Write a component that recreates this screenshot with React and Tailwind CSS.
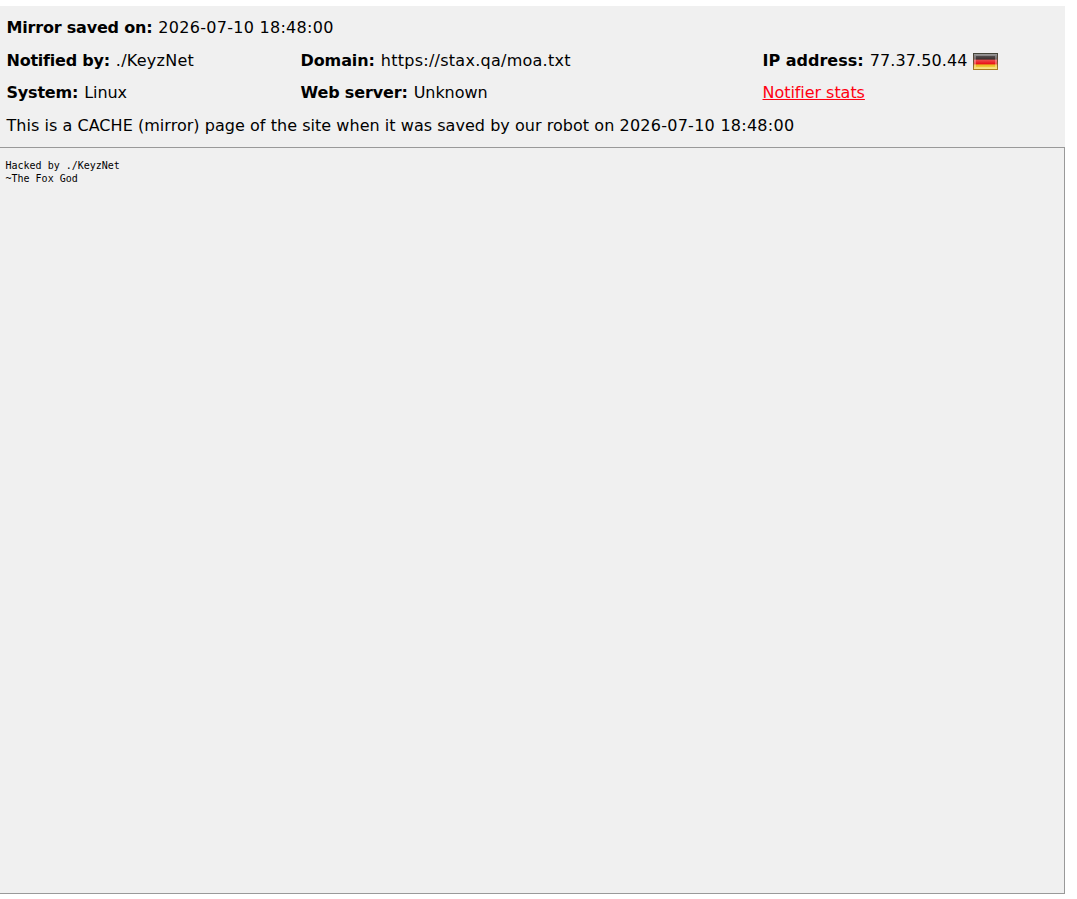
const saved = '2026-07-10 18:48:00';

function Field({ label, labelClass = '', valueClass = '', children }) {
  return (
    <div className="whitespace-nowrap">
      <b className={labelClass}>{label}</b> <span className={`ml-[0.9px] ${valueClass}`}>{children}</span>
    </div>
  );
}

function FlagDE() {
  return (
    <svg width="25" height="17" viewBox="0 0 25 17" className="ml-[5px] mt-[1px] shrink-0">
      <defs>
        <linearGradient id="stripes" x1="0" y1="0" x2="0" y2="1">
          <stop offset="0" stopColor="#858585" />
          <stop offset="0.16" stopColor="#555050" />
          <stop offset="0.36" stopColor="#3c3030" />
          <stop offset="0.42" stopColor="#ec4a4a" />
          <stop offset="0.64" stopColor="#ea1018" />
          <stop offset="0.7" stopColor="#e8b820" />
          <stop offset="1" stopColor="#fbe45c" />
        </linearGradient>
        <linearGradient id="frame" x1="0" y1="0" x2="0" y2="1">
          <stop offset="0" stopColor="#45453a" />
          <stop offset="0.5" stopColor="#6c4a34" />
          <stop offset="1" stopColor="#a87c20" />
        </linearGradient>
      </defs>
      <rect width="25" height="17" fill="url(#stripes)" />
      <rect x="2" y="2" width="21" height="13" fill="none" stroke="#fff" strokeOpacity="0.3" strokeWidth="2" />
      <rect x="0.5" y="0.5" width="24" height="16" fill="none" stroke="url(#frame)" />
    </svg>
  );
}

export default function App() {
  return (
    <div className="h-[899px] bg-white pt-[6px] pr-3 text-black">
      <header className="h-[141px] bg-[#f0f0f0] pl-[6.5px] pt-[6px] font-['Verdana','DejaVu_Sans',sans-serif] text-[16px] leading-[32.5px]">
        <Field label="Mirror saved on:" labelClass="tracking-[-0.2px]" valueClass="tracking-[0.28px]">{saved}</Field>
        <div className="grid grid-cols-[294px_462px_1fr]">
          <Field label="Notified by:" labelClass="tracking-[-0.23px]" valueClass="tracking-[0.24px]">./KeyzNet</Field>
          <Field label="Domain:" labelClass="tracking-[-0.1px]" valueClass="tracking-[0.26px]">https://stax.qa/moa.txt</Field>
          <div className="flex items-center">
            <Field label="IP address:" valueClass="tracking-[0.12px]">77.37.50.44</Field>
            <FlagDE />
          </div>
          <Field label="System:" labelClass="tracking-[-0.2px]" valueClass="tracking-[-0.05px]">Linux</Field>
          <Field label="Web server:" labelClass="tracking-[-0.15px]" valueClass="tracking-[-0.05px]">Unknown</Field>
          <div>
            <a href="#" className="text-[#ff0011] underline tracking-[-0.05px]">Notifier stats</a>
          </div>
        </div>
        <p className="tracking-[0.04px]">
          This is a CACHE (mirror) page of the site when it was saved by our robot on{' '}
          <span className="tracking-[0.26px]">{saved}</span>
        </p>
      </header>
      <main className="h-[747px] border border-l-0 border-[#999] bg-[#f0f0f0] pl-[5.5px] pt-[11px]">
        <pre className="font-['DejaVu_Sans_Mono',monospace] text-[10px] leading-[13px]">{'Hacked by ./KeyzNet\n~The Fox God'}</pre>
      </main>
    </div>
  );
}
